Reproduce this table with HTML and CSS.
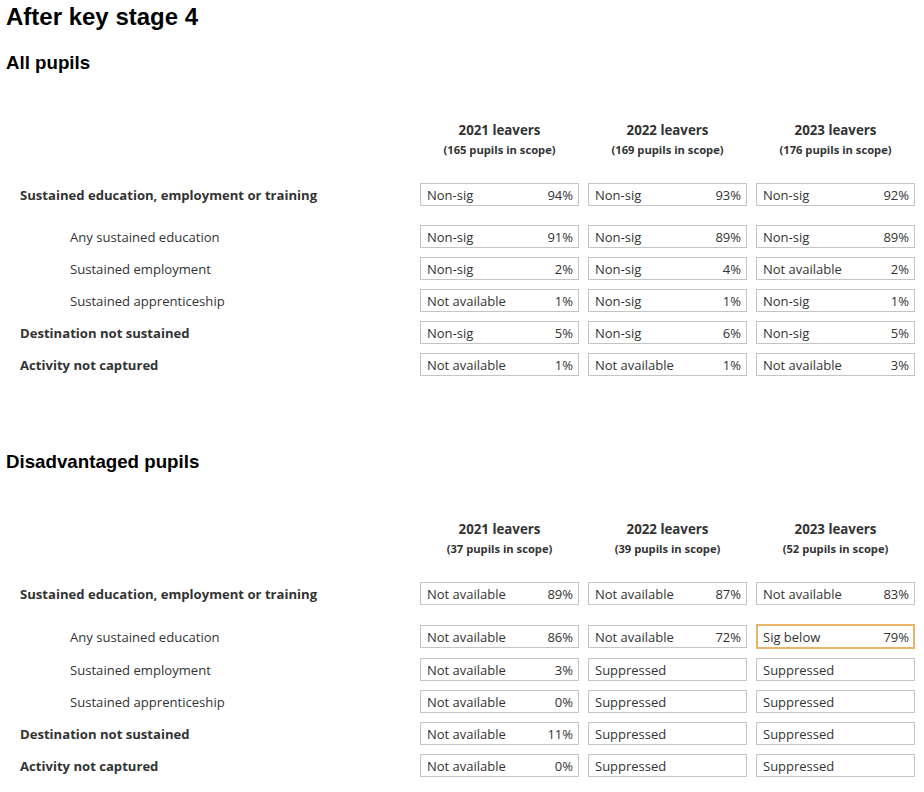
FILE: index.html
```html
<!DOCTYPE html>
<html lang="en">
<head>
<meta charset="utf-8">
<title>After key stage 4</title>
<link rel="stylesheet" href="styles.css">
</head>
<body>
<h1 class="page-title">After key stage 4</h1>

<section class="section">
  <h2 class="section-title">All pupils</h2>
  <div class="table">
    <div class="row head-row">
      <div class="label"></div>
      <div class="col-head"><div class="year">2021 leavers</div><div class="scope">(165 pupils in scope)</div></div>
      <div class="col-head"><div class="year">2022 leavers</div><div class="scope">(169 pupils in scope)</div></div>
      <div class="col-head"><div class="year">2023 leavers</div><div class="scope">(176 pupils in scope)</div></div>
    </div>
    <div class="rows">
      <div class="row first">
        <div class="label bold">Sustained education, employment or training</div>
        <div class="cell"><span>Non-sig</span><span>94%</span></div>
        <div class="cell"><span>Non-sig</span><span>93%</span></div>
        <div class="cell"><span>Non-sig</span><span>92%</span></div>
      </div>
      <div class="row">
        <div class="label sub">Any sustained education</div>
        <div class="cell"><span>Non-sig</span><span>91%</span></div>
        <div class="cell"><span>Non-sig</span><span>89%</span></div>
        <div class="cell"><span>Non-sig</span><span>89%</span></div>
      </div>
      <div class="row">
        <div class="label sub">Sustained employment</div>
        <div class="cell"><span>Non-sig</span><span>2%</span></div>
        <div class="cell"><span>Non-sig</span><span>4%</span></div>
        <div class="cell"><span>Not available</span><span>2%</span></div>
      </div>
      <div class="row">
        <div class="label sub">Sustained apprenticeship</div>
        <div class="cell"><span>Not available</span><span>1%</span></div>
        <div class="cell"><span>Non-sig</span><span>1%</span></div>
        <div class="cell"><span>Non-sig</span><span>1%</span></div>
      </div>
      <div class="row">
        <div class="label bold">Destination not sustained</div>
        <div class="cell"><span>Non-sig</span><span>5%</span></div>
        <div class="cell"><span>Non-sig</span><span>6%</span></div>
        <div class="cell"><span>Non-sig</span><span>5%</span></div>
      </div>
      <div class="row">
        <div class="label bold">Activity not captured</div>
        <div class="cell"><span>Not available</span><span>1%</span></div>
        <div class="cell"><span>Not available</span><span>1%</span></div>
        <div class="cell"><span>Not available</span><span>3%</span></div>
      </div>
    </div>
  </div>
</section>

<section class="section second">
  <h2 class="section-title">Disadvantaged pupils</h2>
  <div class="table">
    <div class="row head-row">
      <div class="label"></div>
      <div class="col-head"><div class="year">2021 leavers</div><div class="scope">(37 pupils in scope)</div></div>
      <div class="col-head"><div class="year">2022 leavers</div><div class="scope">(39 pupils in scope)</div></div>
      <div class="col-head"><div class="year">2023 leavers</div><div class="scope">(52 pupils in scope)</div></div>
    </div>
    <div class="rows">
      <div class="row first">
        <div class="label bold">Sustained education, employment or training</div>
        <div class="cell"><span>Not available</span><span>89%</span></div>
        <div class="cell"><span>Not available</span><span>87%</span></div>
        <div class="cell"><span>Not available</span><span>83%</span></div>
      </div>
      <div class="row">
        <div class="label sub">Any sustained education</div>
        <div class="cell"><span>Not available</span><span>86%</span></div>
        <div class="cell"><span>Not available</span><span>72%</span></div>
        <div class="cell sig-below"><span>Sig below</span><span>79%</span></div>
      </div>
      <div class="row">
        <div class="label sub">Sustained employment</div>
        <div class="cell"><span>Not available</span><span>3%</span></div>
        <div class="cell"><span>Suppressed</span></div>
        <div class="cell"><span>Suppressed</span></div>
      </div>
      <div class="row">
        <div class="label sub">Sustained apprenticeship</div>
        <div class="cell"><span>Not available</span><span>0%</span></div>
        <div class="cell"><span>Suppressed</span></div>
        <div class="cell"><span>Suppressed</span></div>
      </div>
      <div class="row">
        <div class="label bold">Destination not sustained</div>
        <div class="cell"><span>Not available</span><span>11%</span></div>
        <div class="cell"><span>Suppressed</span></div>
        <div class="cell"><span>Suppressed</span></div>
      </div>
      <div class="row">
        <div class="label bold">Activity not captured</div>
        <div class="cell"><span>Not available</span><span>0%</span></div>
        <div class="cell"><span>Suppressed</span></div>
        <div class="cell"><span>Suppressed</span></div>
      </div>
    </div>
  </div>
</section>
</body>
</html>
```

FILE: styles.css
```css
html, body {
  margin: 0;
  padding: 0;
  background: #ffffff;
}

body {
  padding: 0 6px;
  font-family: "Open Sans", "Noto Sans", "Liberation Sans", sans-serif;
  color: #333333;
}

.page-title {
  font-family: "Liberation Sans", Arial, sans-serif;
  font-size: 24px;
  line-height: 26px;
  font-weight: bold;
  color: #000000;
  margin: 4px 0 0 0;
}

.section {
  margin-top: 21px;
}

.section.second {
  margin-top: 74px;
}

.section-title {
  font-family: "Liberation Sans", Arial, sans-serif;
  font-size: 18.72px;
  line-height: 24px;
  font-weight: bold;
  color: #000000;
  margin: 0;
}

.table {
  margin-top: 45px;
}

.row {
  display: flex;
  align-items: center;
  gap: 9px;
}

.head-row {
  margin-bottom: 23px;
}

.label {
  width: 405px;
  flex: 0 0 405px;
  font-size: 13.1px;
}

.label.bold {
  font-weight: 700;
  padding-left: 14px;
  box-sizing: border-box;
}

.label.sub {
  padding-left: 64px;
  box-sizing: border-box;
}

.col-head {
  width: 159px;
  flex: 0 0 159px;
  text-align: center;
  font-weight: 700;
}

.year {
  font-size: 13.3px;
  line-height: 20px;
}

.scope {
  font-size: 11.2px;
  line-height: 20px;
}

.rows {
  display: flex;
  flex-direction: column;
  gap: 9px;
}

.row.first {
  margin-bottom: 10px;
}

.cell {
  width: 159px;
  flex: 0 0 159px;
  height: 23px;
  box-sizing: border-box;
  border: 1px solid #c4c4c4;
  display: flex;
  justify-content: space-between;
  align-items: center;
  padding: 0 5px 0 6px;
  font-size: 13px;
  color: #333333;
}

.cell.sig-below {
  height: 25px;
  border: 2px solid #e8b46a;
  padding: 0 4px 0 5px;
}
```
